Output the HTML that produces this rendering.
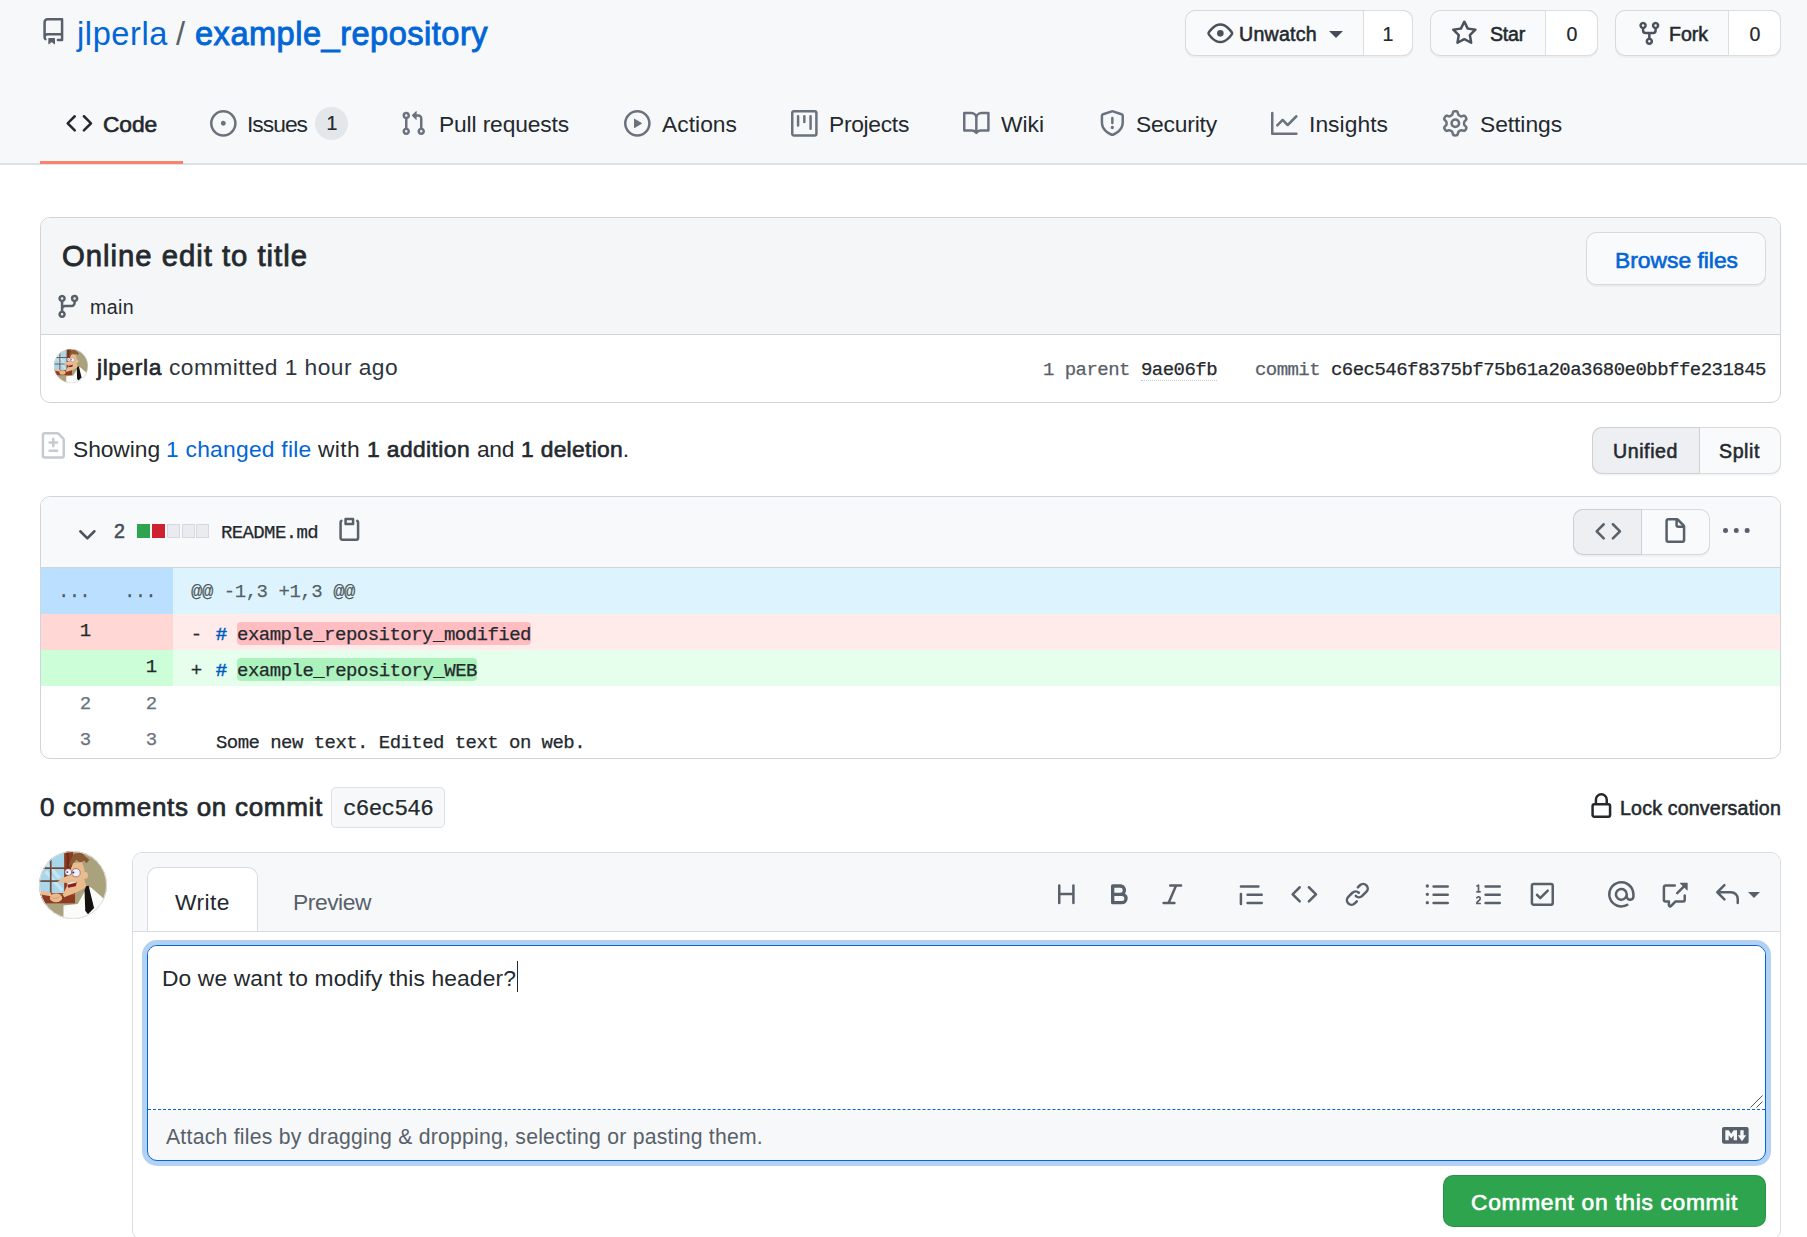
<!DOCTYPE html>
<html lang="en">
<head>
<meta charset="utf-8">
<title>Online edit to title · jlperla/example_repository@c6ec546</title>
<style>
html,body{margin:0;padding:0;background:#fff;}
body{width:1807px;height:1237px;position:relative;overflow:hidden;font-family:"Liberation Sans",sans-serif;color:#24292e;}
.b{position:absolute;box-sizing:border-box;}
.t{position:absolute;white-space:pre;line-height:1;}
.i{position:absolute;display:block;overflow:visible;}
.ds{width:13px;height:14px;background:#e9ebee;border:1px solid #d5d9de;}
.btn{background:#f9fafb;border:1px solid rgba(27,31,35,.15);border-radius:10px;box-shadow:0 2px 0 rgba(27,31,35,.04);}
.cnt{background:#fff;border:1px solid rgba(27,31,35,.15);border-radius:0 10px 10px 0;}
</style>
</head>
<body>
<svg width="0" height="0" style="position:absolute"><defs>
<clipPath id="avc"><circle cx="50" cy="50" r="50"/></clipPath>
<symbol id="av" viewBox="0 0 100 100">
<g clip-path="url(#avc)">
<rect width="100" height="100" fill="#aaa27d"/>
<rect x="0" y="4" width="38" height="60" fill="#a9d6ea"/>
<path d="M4 10 L30 40 M10 30 L34 58" stroke="#c7e6f3" stroke-width="5" fill="none"/>
<rect x="16" y="4" width="2.5" height="60" fill="#6d4a3a"/>
<rect x="0" y="24" width="38" height="2.5" fill="#6d4a3a"/>
<rect x="0" y="43" width="38" height="2.5" fill="#6d4a3a"/>
<rect x="37" y="0" width="13" height="76" fill="#8c3b22"/>
<rect x="41" y="0" width="3" height="70" fill="#6f2c18"/>
<rect x="0" y="62" width="53" height="15" fill="#8c3b22"/>
<rect x="0" y="62" width="53" height="3" fill="#a5502f"/>
<path d="M51 4 L63 2 L67 7 L74 13 L70 18 L66 14 L61 18 L55 13 L49 20 L43 22 L47 13 Z" fill="#8b5a33"/>
<path d="M50 18 L63 16 L67 28 L66 40 L70 53 L57 60 L37 68 L35 64 L41 52 L41 47 L27 45.500 L34 40 L43 36 L47 26 Z" fill="#eabb8d"/>
<ellipse cx="68" cy="36" rx="4" ry="5" fill="#eabb8d"/>
<path d="M41 47 L56 44 L54 52 L43 54 Z" fill="#8c1f22"/>
<path d="M41.500 46.800 L55.500 44 L55 46.500 L42 49.500 Z" fill="#f6efe4"/>
<circle cx="43" cy="31" r="5" fill="#f4eefb" stroke="#5b4a55" stroke-width=".8"/>
<circle cx="54.500" cy="32" r="6" fill="#f4eefb" stroke="#5b4a55" stroke-width=".8"/>
<circle cx="41.500" cy="31" r="1.300" fill="#2d2f8f"/><circle cx="50.500" cy="31.500" r="1.500" fill="#2d2f8f"/>
<path d="M70 52 L77 54 L93 68 L100 78 L100 100 L36 100 L36 80 L57 78 L67 60 Z" fill="#fbfbfa"/>
<path d="M69 52 L73 51 L81 84 L72 93 L68 88 L67 58 Z" fill="#15110f"/>
<path d="M2 58 L17 61 L19 67 L3 64 Z" fill="#eabb8d"/>
<ellipse cx="25" cy="69" rx="9" ry="6.500" fill="#eabb8d"/>
<path d="M19 68 Q24 72 30 67" stroke="#c98f63" stroke-width="1" fill="none"/>
</g>
<circle cx="50" cy="50" r="49.300" fill="none" stroke="#dfe1e4" stroke-width="1.400"/>
</symbol></defs></svg>
<div class="b" style="left:0;top:0;width:1807px;height:165px;background:#f6f8fa;border-bottom:2px solid #dde1e6"></div>
<div class="b" style="left:40px;top:161px;width:143px;height:3px;background:#f9826c"></div>
<div class="b btn" style="left:1185px;top:10px;width:228px;height:46px"></div><div class="b cnt" style="left:1363px;top:10px;width:50px;height:46px"></div>
<div class="b btn" style="left:1430px;top:10px;width:168px;height:46px"></div><div class="b cnt" style="left:1545px;top:10px;width:53px;height:46px"></div>
<div class="b btn" style="left:1615px;top:10px;width:166px;height:46px"></div><div class="b cnt" style="left:1728px;top:10px;width:53px;height:46px"></div>
<div class="b" style="left:1329px;top:31px;width:0;height:0;border:7px solid transparent;border-top-color:#444d56;border-bottom:0"></div>
<div class="b" style="left:315px;top:107px;width:33px;height:33px;border-radius:17px;background:rgba(209,213,218,.5)"></div>
<div class="b" style="left:40px;top:217px;width:1741px;height:186px;border:1px solid #d1d5da;border-radius:10px;background:#fff;overflow:hidden"><div class="b" style="left:0;top:0;width:1739px;height:117px;border-bottom:1px solid #d1d5da;background:#f4f6f8"></div></div>
<div class="b btn" style="left:1586px;top:232px;width:180px;height:53px;border-radius:10px"></div>
<svg class="i" style="left:54px;top:349px" width="34" height="34"><use href="#av"/></svg>
<div class="b btn" style="left:1592px;top:427px;width:189px;height:47px"></div>
<div class="b" style="left:1592px;top:427px;width:108px;height:47px;background:#edeff2;border:1px solid rgba(27,31,35,.15);border-radius:10px 0 0 10px"></div>
<div class="b" style="left:40px;top:496px;width:1741px;height:263px;border:1px solid #d1d5da;border-radius:10px;background:#fff;overflow:hidden">
 <div class="b" style="left:0;top:0;width:1739px;height:71px;background:#f8f9fb;border-bottom:1px solid #d1d5da"></div>
 <div class="b" style="left:0;top:71px;width:132px;height:46px;background:#bbdfff"></div><div class="b" style="left:132px;top:71px;width:1607px;height:46px;background:#ddf4ff"></div>
 <div class="b" style="left:0;top:117px;width:132px;height:36px;background:#ffd7d5"></div><div class="b" style="left:132px;top:117px;width:1607px;height:36px;background:#ffebe9"></div>
 <div class="b" style="left:0;top:153px;width:132px;height:36px;background:#ccffd8"></div><div class="b" style="left:132px;top:153px;width:1607px;height:36px;background:#e6ffec"></div>
</div>
<div class="b" style="left:237px;top:622px;width:294px;height:23px;background:#ffbdc2;border-radius:4px"></div>
<div class="b" style="left:237px;top:658px;width:240px;height:23px;background:#abf2bc;border-radius:4px"></div>
<div class="b" style="left:137px;top:524px;width:13px;height:14px;background:#2ea44f"></div>
<div class="b" style="left:152px;top:524px;width:13px;height:14px;background:#cf222e"></div>
<div class="b ds" style="left:167px;top:524px"></div>
<div class="b ds" style="left:182px;top:524px"></div>
<div class="b ds" style="left:196px;top:524px"></div>
<div class="b btn" style="left:1573px;top:509px;width:137px;height:46px"></div>
<div class="b" style="left:1573px;top:509px;width:69px;height:46px;background:#edeff2;border:1px solid rgba(27,31,35,.15);border-radius:10px 0 0 10px"></div>
<div class="b" style="left:331px;top:787px;width:114px;height:41px;background:#f6f8fa;border:1px solid #dde1e6;border-radius:5px"></div>
<svg class="i" style="left:39px;top:851px" width="68" height="68"><use href="#av"/></svg>
<div class="b" style="left:132px;top:852px;width:1649px;height:388px;border:1px solid #dadde2;border-radius:10px;background:#fff;overflow:hidden"><div class="b" style="left:0;top:0;width:1647px;height:79px;background:#f6f8fa;border-bottom:1px solid #d8dce1"></div></div>
<div class="b" style="left:147px;top:867px;width:111px;height:64px;background:#fff;border:1px solid #d8dce1;border-bottom:0;border-radius:10px 10px 0 0"></div>
<div class="b" style="left:147px;top:945px;width:1619px;height:216px;border:1px solid #0366d6;border-radius:10px;background:#f6f8fa;box-shadow:0 0 0 5px rgba(3,102,214,.3)"></div>
<div class="b" style="left:148px;top:946px;width:1617px;height:164px;background:#fff;border-bottom:1px dashed #0366d6;border-radius:9px 9px 0 0"></div>
<svg class="i" style="left:1749px;top:1094px" width="14" height="14" viewBox="0 0 14 14" fill="none" stroke="#555" stroke-width="1"><path d="M1.500 13.500 L13.500 1.500 M7.500 13.500 L13.500 7.500"/></svg>
<div class="b" style="left:517px;top:961px;width:1px;height:31px;background:#24292e"></div>
<div class="b" style="left:1443px;top:1175px;width:323px;height:52px;background:#2ea44f;border:1px solid rgba(27,31,35,.15);border-radius:10px"></div>
<div class="b" style="left:1748px;top:892px;width:0;height:0;border:6px solid transparent;border-top:6.5px solid #586069;border-bottom:0"></div>

<svg class="i" style="left:40px;top:18px" width="26.67" height="26.67" viewBox="0 0 16 16" fill="#586069"><path fill-rule="evenodd" d="M2 2.5A2.5 2.5 0 014.5 0h8.75a.75.75 0 01.75.75v12.5a.75.75 0 01-.75.75h-2.5a.75.75 0 110-1.5h1.75v-2h-8a1 1 0 00-.714 1.7.75.75 0 01-1.072 1.05A2.495 2.495 0 012 11.5v-9zm10.5-1V9h-8c-.356 0-.694.074-1 .208V2.5a1 1 0 011-1h8zM5 12.25v3.25a.25.25 0 00.4.2l1.45-1.087a.25.25 0 01.3 0L8.6 15.7a.25.25 0 00.4-.2v-3.25a.25.25 0 00-.25-.25h-3.5a.25.25 0 00-.25.25z"/></svg>
<svg class="i" style="left:1207px;top:20px" width="26.67" height="26.67" viewBox="0 0 16 16" fill="#4a525b"><path fill-rule="evenodd" d="M1.679 7.932c.412-.621 1.242-1.75 2.366-2.717C5.175 4.242 6.527 3.5 8 3.5c1.473 0 2.824.742 3.955 1.715 1.124.967 1.954 2.096 2.366 2.717a.119.119 0 010 .136c-.412.621-1.242 1.75-2.366 2.717C10.825 11.758 9.473 12.5 8 12.5c-1.473 0-2.824-.742-3.955-1.715C2.92 9.818 2.09 8.69 1.679 8.068a.119.119 0 010-.136zM8 2c-1.981 0-3.67.992-4.933 2.078C1.797 5.169.88 6.423.43 7.1a1.619 1.619 0 000 1.798c.45.678 1.367 1.932 2.637 3.024C4.329 13.008 6.019 14 8 14c1.981 0 3.67-.992 4.933-2.078 1.27-1.091 2.187-2.345 2.637-3.023a1.619 1.619 0 000-1.798c-.45-.678-1.367-1.932-2.637-3.023C11.671 2.992 9.981 2 8 2zm0 8a2 2 0 100-4 2 2 0 000 4z"/></svg>
<svg class="i" style="left:1451px;top:20px" width="26.67" height="26.67" viewBox="0 0 16 16" fill="#4a525b"><path fill-rule="evenodd" d="M8 .25a.75.75 0 01.673.418l1.882 3.815 4.21.612a.75.75 0 01.416 1.279l-3.046 2.97.719 4.192a.75.75 0 01-1.088.791L8 12.347l-3.766 1.98a.75.75 0 01-1.088-.79l.72-4.194L.818 6.374a.75.75 0 01.416-1.28l4.21-.611L7.327.668A.75.75 0 018 .25zm0 2.445L6.615 5.5a.75.75 0 01-.564.41l-3.097.45 2.24 2.184a.75.75 0 01.216.664l-.528 3.084 2.769-1.456a.75.75 0 01.698 0l2.77 1.456-.53-3.084a.75.75 0 01.216-.664l2.24-2.183-3.096-.45a.75.75 0 01-.564-.41L8 2.694v.001z"/></svg>
<svg class="i" style="left:1636px;top:20px" width="26.67" height="26.67" viewBox="0 0 16 16" fill="#4a525b"><path fill-rule="evenodd" d="M5 3.25a.75.75 0 11-1.5 0 .75.75 0 011.5 0zm0 2.122a2.25 2.25 0 10-1.5 0v.878A2.25 2.25 0 005.75 8.5h1.5v2.128a2.251 2.251 0 101.5 0V8.5h1.5a2.25 2.25 0 002.25-2.25v-.878a2.25 2.25 0 10-1.5 0v.878a.75.75 0 01-.75.75h-4.5A.75.75 0 015 6.25v-.878zm3.75 7.378a.75.75 0 11-1.5 0 .75.75 0 011.5 0zm3-8.75a.75.75 0 100-1.5.75.75 0 000 1.5z"/></svg>
<svg class="i" style="left:66px;top:110px" width="26.67" height="26.67" viewBox="0 0 16 16" fill="#24292e"><path fill-rule="evenodd" d="M4.72 3.22a.75.75 0 011.06 1.06L2.06 8l3.72 3.72a.75.75 0 11-1.06 1.06L.47 8.53a.75.75 0 010-1.06l4.25-4.25zm6.56 0a.75.75 0 10-1.06 1.06L13.94 8l-3.72 3.72a.75.75 0 101.06 1.06l4.25-4.25a.75.75 0 000-1.06l-4.25-4.25z"/></svg>
<svg class="i" style="left:210px;top:110px" width="26.67" height="26.67" viewBox="0 0 16 16" fill="#6a737d"><path fill-rule="evenodd" d="M8 9.5a1.5 1.5 0 100-3 1.5 1.5 0 000 3zM8 0a8 8 0 100 16A8 8 0 008 0zM1.5 8a6.5 6.5 0 1113 0 6.5 6.5 0 01-13 0z"/></svg>
<svg class="i" style="left:400px;top:110px" width="26.67" height="26.67" viewBox="0 0 16 16" fill="#6a737d"><path fill-rule="evenodd" d="M7.177 3.073L9.573.677A.25.25 0 0110 .854v4.792a.25.25 0 01-.427.177L7.177 3.427a.25.25 0 010-.354zM3.75 2.5a.75.75 0 100 1.5.75.75 0 000-1.5zm-2.25.75a2.25 2.25 0 113 2.122v5.256a2.251 2.251 0 11-1.5 0V5.372A2.25 2.25 0 011.5 3.25zM11 2.5h-1V4h1a1 1 0 011 1v5.628a2.251 2.251 0 101.5 0V5A2.5 2.5 0 0011 2.5zm1 10.25a.75.75 0 111.5 0 .75.75 0 01-1.5 0zM3.75 12a.75.75 0 100 1.5.75.75 0 000-1.5z"/></svg>
<svg class="i" style="left:624px;top:110px" width="26.67" height="26.67" viewBox="0 0 16 16" fill="#6a737d"><path fill-rule="evenodd" d="M1.5 8a6.5 6.5 0 1113 0 6.5 6.5 0 01-13 0zM8 0a8 8 0 100 16A8 8 0 008 0zM6.379 5.227A.25.25 0 006 5.442v5.117a.25.25 0 00.379.214l4.264-2.559a.25.25 0 000-.428L6.379 5.227z"/></svg>
<svg class="i" style="left:791px;top:110px" width="26.67" height="26.67" viewBox="0 0 16 16" fill="#6a737d"><path fill-rule="evenodd" d="M1.75 0A1.75 1.75 0 000 1.75v12.5C0 15.216.784 16 1.75 16h12.5A1.75 1.75 0 0016 14.25V1.75A1.75 1.75 0 0014.25 0H1.75zM1.5 1.75a.25.25 0 01.25-.25h12.5a.25.25 0 01.25.25v12.5a.25.25 0 01-.25.25H1.75a.25.25 0 01-.25-.25V1.75zM11.75 3a.75.75 0 00-.75.75v7.5a.75.75 0 001.5 0v-7.5a.75.75 0 00-.75-.75zm-8.25.75a.75.75 0 011.5 0v5.5a.75.75 0 01-1.5 0v-5.5zM8 3a.75.75 0 00-.75.75v3.5a.75.75 0 001.5 0v-3.5A.75.75 0 008 3z"/></svg>
<svg class="i" style="left:962.7px;top:110px" width="26.67" height="26.67" viewBox="0 0 16 16" fill="#6a737d"><path fill-rule="evenodd" d="M0 1.75A.75.75 0 01.75 1h4.253c1.227 0 2.317.59 3 1.501A3.744 3.744 0 0111.006 1h4.245a.75.75 0 01.75.75v10.5a.75.75 0 01-.75.75h-4.507a2.25 2.25 0 00-1.591.659l-.622.621a.75.75 0 01-1.06 0l-.622-.621A2.25 2.25 0 005.258 13H.75a.75.75 0 01-.75-.75V1.75zm8.755 3a2.25 2.25 0 012.25-2.25H14.5v9h-3.757c-.71 0-1.4.201-1.992.572l.004-7.322zm-1.504 7.324l.004-5.073-.002-2.253A2.25 2.25 0 005.003 2.5H1.5v9h3.757a3.75 3.75 0 011.994.574z"/></svg>
<svg class="i" style="left:1098.5px;top:110px" width="26.67" height="26.67" viewBox="0 0 16 16" fill="#6a737d"><path fill-rule="evenodd" d="M7.467.133a1.75 1.75 0 011.066 0l5.25 1.68A1.75 1.75 0 0115 3.48V7c0 1.566-.32 3.182-1.303 4.682-.983 1.498-2.585 2.813-5.032 3.855a1.7 1.7 0 01-1.33 0c-2.447-1.042-4.049-2.357-5.032-3.855C1.32 10.182 1 8.566 1 7V3.48a1.75 1.75 0 011.217-1.667l5.25-1.68zm.61 1.429a.25.25 0 00-.153 0l-5.25 1.68a.25.25 0 00-.174.238V7c0 1.358.275 2.666 1.057 3.86.784 1.194 2.121 2.34 4.366 3.297a.2.2 0 00.154 0c2.245-.956 3.582-2.104 4.366-3.298C13.225 9.666 13.5 8.36 13.5 7V3.48a.25.25 0 00-.174-.237l-5.25-1.68zM9 10.5a1 1 0 11-2 0 1 1 0 012 0zm-.25-5.75a.75.75 0 10-1.5 0v3a.75.75 0 001.5 0v-3z"/></svg>
<svg class="i" style="left:1271px;top:110px" width="26.67" height="26.67" viewBox="0 0 16 16" fill="#6a737d"><path fill-rule="evenodd" d="M1.5 1.75a.75.75 0 00-1.5 0v12.5c0 .414.336.75.75.75h14.5a.75.75 0 000-1.5H1.5V1.75zm14.28 2.53a.75.75 0 00-1.06-1.06L10 7.94 7.53 5.47a.75.75 0 00-1.06 0L3.22 8.72a.75.75 0 001.06 1.06L7 7.06l2.47 2.47a.75.75 0 001.06 0l5.25-5.25z"/></svg>
<svg class="i" style="left:1442px;top:110px" width="26.67" height="26.67" viewBox="0 0 16 16" fill="#6a737d"><path fill-rule="evenodd" d="M7.429 1.525a6.593 6.593 0 011.142 0c.036.003.108.036.137.146l.289 1.105c.147.56.55.967.997 1.189.174.086.341.183.501.29.417.278.97.423 1.53.27l1.102-.303c.11-.03.175.016.195.046.219.31.41.641.573.989.014.031.022.11-.059.19l-.815.806c-.411.406-.562.957-.53 1.456a4.588 4.588 0 010 .582c-.032.499.119 1.05.53 1.456l.815.806c.08.08.073.159.059.19a6.494 6.494 0 01-.573.99c-.02.029-.086.074-.195.045l-1.103-.303c-.559-.153-1.112-.008-1.529.27-.16.107-.327.204-.5.29-.449.222-.851.628-.998 1.189l-.289 1.105c-.029.11-.101.143-.137.146a6.613 6.613 0 01-1.142 0c-.036-.003-.108-.037-.137-.146l-.289-1.105c-.147-.56-.55-.967-.997-1.189a4.502 4.502 0 01-.501-.29c-.417-.278-.97-.423-1.53-.27l-1.102.303c-.11.03-.175-.016-.195-.046a6.492 6.492 0 01-.573-.989c-.014-.031-.022-.11.059-.19l.815-.806c.411-.406.562-.957.53-1.456a4.587 4.587 0 010-.582c.032-.499-.119-1.05-.53-1.456l-.815-.806c-.08-.08-.073-.159-.059-.19a6.44 6.44 0 01.573-.99c.02-.029.086-.075.195-.045l1.103.303c.559.153 1.112.008 1.529-.27.16-.107.327-.204.5-.29.449-.222.851-.628.998-1.189l.289-1.105c.029-.11.101-.143.137-.146zM8 0c-.236 0-.47.01-.701.03-.743.065-1.29.615-1.458 1.261l-.29 1.106c-.017.066-.078.158-.211.224a5.994 5.994 0 00-.668.386c-.123.082-.233.09-.3.071L3.27 2.776c-.644-.177-1.392.02-1.82.63a7.977 7.977 0 00-.704 1.217c-.315.675-.111 1.422.363 1.891l.815.806c.05.048.098.147.088.294a6.084 6.084 0 000 .772c.01.147-.038.246-.088.294l-.815.806c-.474.469-.678 1.216-.363 1.891.2.428.436.835.704 1.218.428.609 1.176.806 1.82.63l1.103-.303c.066-.019.176-.011.299.071.213.143.436.272.668.386.133.066.194.158.212.224l.289 1.106c.169.646.715 1.196 1.458 1.26a8.094 8.094 0 001.402 0c.743-.064 1.29-.614 1.458-1.26l.29-1.106c.017-.066.078-.158.211-.224a5.98 5.98 0 00.668-.386c.123-.082.233-.09.3-.071l1.102.302c.644.177 1.392-.02 1.82-.63.268-.382.505-.789.704-1.217.315-.675.111-1.422-.364-1.891l-.814-.806c-.05-.048-.098-.147-.088-.294a6.1 6.1 0 000-.772c-.01-.147.039-.246.088-.294l.814-.806c.475-.469.679-1.216.364-1.891a7.992 7.992 0 00-.704-1.218c-.428-.609-1.176-.806-1.82-.63l-1.103.303c-.066.019-.176.011-.299-.071a5.991 5.991 0 00-.668-.386c-.133-.066-.194-.158-.212-.224L10.16 1.29C9.99.645 9.444.095 8.701.031A8.094 8.094 0 008 0zm1.5 8a1.5 1.5 0 11-3 0 1.5 1.5 0 013 0zM11 8a3 3 0 11-6 0 3 3 0 016 0z"/></svg>
<svg class="i" style="left:55px;top:293px" width="26.67" height="26.67" viewBox="0 0 16 16" fill="#586069"><path fill-rule="evenodd" d="M11.75 2.5a.75.75 0 100 1.5.75.75 0 000-1.5zm-2.25.75a2.25 2.25 0 113 2.122V6A2.5 2.5 0 0110 8.5H6a1 1 0 00-1 1v1.128a2.251 2.251 0 11-1.5 0V5.372a2.25 2.25 0 111.5 0v1.836A2.492 2.492 0 016 7h4a1 1 0 001-1v-.628A2.25 2.25 0 019.5 3.25zM4.25 12a.75.75 0 100 1.5.75.75 0 000-1.5zM3.5 3.25a.75.75 0 111.5 0 .75.75 0 01-1.5 0z"/></svg>
<svg class="i" style="left:40px;top:432px" width="26.67" height="26.67" viewBox="0 0 16 16" fill="#c6cbd1"><path fill-rule="evenodd" d="M2.75 1.5a.25.25 0 00-.25.25v12.5c0 .138.112.25.25.25h10.5a.25.25 0 00.25-.25V4.664a.25.25 0 00-.073-.177l-2.914-2.914a.25.25 0 00-.177-.073H2.75zM1 1.75C1 .784 1.784 0 2.75 0h7.586c.464 0 .909.184 1.237.513l2.914 2.914c.329.328.513.773.513 1.237v9.586A1.75 1.75 0 0113.25 16H2.75A1.75 1.75 0 011 14.25V1.75zm7 1.5a.75.75 0 01.75.75v1.5h1.5a.75.75 0 010 1.5h-1.5v1.5a.75.75 0 01-1.5 0V7h-1.5a.75.75 0 010-1.5h1.5V4A.75.75 0 018 3.25zm-3 8a.75.75 0 01.75-.75h4.5a.75.75 0 010 1.5h-4.5a.75.75 0 01-.75-.75z"/></svg>
<svg class="i" style="left:74px;top:520px" width="26.67" height="26.67" viewBox="0 0 16 16" fill="#4a525b"><path fill-rule="evenodd" d="M12.78 6.22a.75.75 0 010 1.06l-4.25 4.25a.75.75 0 01-1.06 0L3.22 7.28a.75.75 0 011.06-1.06L8 9.94l3.72-3.72a.75.75 0 011.06 0z"/></svg>
<svg class="i" style="left:336px;top:516px" width="26.67" height="26.67" viewBox="0 0 16 16" fill="#586069"><path fill-rule="evenodd" d="M5.75 1a.75.75 0 00-.75.75v3c0 .414.336.75.75.75h4.5a.75.75 0 00.75-.75v-3a.75.75 0 00-.75-.75h-4.5zm.75 3V2.5h3V4h-3zm-2.874-.467a.75.75 0 00-.752-1.298A1.75 1.75 0 002 3.75v9.5c0 .966.784 1.75 1.75 1.75h8.5A1.75 1.75 0 0014 13.25v-9.5a1.75 1.75 0 00-.874-1.515.75.75 0 10-.752 1.298.25.25 0 01.126.217v9.5a.25.25 0 01-.25.25h-8.5a.25.25 0 01-.25-.25v-9.5a.25.25 0 01.126-.217z"/></svg>
<svg class="i" style="left:1595px;top:517.7px" width="26.67" height="26.67" viewBox="0 0 16 16" fill="#586069"><path fill-rule="evenodd" d="M4.72 3.22a.75.75 0 011.06 1.06L2.06 8l3.72 3.72a.75.75 0 11-1.06 1.06L.47 8.53a.75.75 0 010-1.06l4.25-4.25zm6.56 0a.75.75 0 10-1.06 1.06L13.94 8l-3.72 3.72a.75.75 0 101.06 1.06l4.25-4.25a.75.75 0 000-1.06l-4.25-4.25z"/></svg>
<svg class="i" style="left:1662.3px;top:518.3px" width="26.67" height="26.67" viewBox="0 0 16 16" fill="#586069"><path fill-rule="evenodd" d="M3.75 1.5a.25.25 0 00-.25.25v11.5c0 .138.112.25.25.25h8.5a.25.25 0 00.25-.25V6H9.75A1.75 1.75 0 018 4.25V1.5H3.75zm5.75.56v2.19c0 .138.112.25.25.25h2.19L9.5 2.06zM2 1.75C2 .784 2.784 0 3.75 0h5.086c.464 0 .909.184 1.237.513l3.414 3.414c.329.328.513.773.513 1.237v8.086A1.75 1.75 0 0112.25 15h-8.5A1.75 1.75 0 012 13.25V1.75z"/></svg>
<svg class="i" style="left:1723px;top:518.2px" width="26.67" height="26.67" viewBox="0 0 16 16" fill="#586069"><path fill-rule="evenodd" d="M8 9a1.5 1.5 0 100-3 1.5 1.5 0 000 3zM1.5 9a1.5 1.5 0 100-3 1.5 1.5 0 000 3zm13 0a1.5 1.5 0 100-3 1.5 1.5 0 000 3z"/></svg>
<svg class="i" style="left:1588px;top:793px" width="26.67" height="26.67" viewBox="0 0 16 16" fill="#24292e"><path fill-rule="evenodd" d="M4 4v2h-.25A1.75 1.75 0 002 7.75v5.5c0 .966.784 1.75 1.75 1.75h8.5A1.75 1.75 0 0014 13.25v-5.5A1.75 1.75 0 0012.25 6H12V4a4 4 0 10-8 0zm6.5 2V4a2.5 2.5 0 00-5 0v2h5zM12 7.5h.25a.25.25 0 01.25.25v5.5a.25.25 0 01-.25.25h-8.5a.25.25 0 01-.25-.25v-5.5a.25.25 0 01.25-.25H12z"/></svg>
<svg class="i" style="left:1053.2px;top:880.8px" width="26.67" height="26.67" viewBox="0 0 16 16" fill="#586069"><path fill-rule="evenodd" d="M3.75 2a.75.75 0 01.75.75V7h7V2.75a.75.75 0 011.5 0v10.5a.75.75 0 01-1.5 0V8.5h-7v4.75a.75.75 0 01-1.5 0V2.75A.75.75 0 013.75 2z"/></svg>
<svg class="i" style="left:1106.2px;top:880.8px" width="26.67" height="26.67" viewBox="0 0 16 16" fill="#586069"><path fill-rule="evenodd" d="M4 2a1 1 0 00-1 1v10a1 1 0 001 1h5.5a3.5 3.5 0 001.852-6.47A3.5 3.5 0 008.5 2H4zm4.5 5a1.5 1.5 0 100-3H5v3h3.5zM5 9v3h4.5a1.5 1.5 0 000-3H5z"/></svg>
<svg class="i" style="left:1159.2px;top:880.8px" width="26.67" height="26.67" viewBox="0 0 16 16" fill="#586069"><path fill-rule="evenodd" d="M6 2.75A.75.75 0 016.75 2h6.5a.75.75 0 010 1.5h-2.505l-3.858 9H9.25a.75.75 0 010 1.5h-6.5a.75.75 0 010-1.5h2.505l3.858-9H6.75A.75.75 0 016 2.75z"/></svg>
<svg class="i" style="left:1238px;top:880.8px" width="26.67" height="26.67" viewBox="0 0 16 16" fill="#586069"><path fill-rule="evenodd" d="M1.75 2.5a.75.75 0 000 1.5h10.5a.75.75 0 000-1.5H1.75zm4 5a.75.75 0 000 1.5h8.5a.75.75 0 000-1.5h-8.5zm0 5a.75.75 0 000 1.5h8.5a.75.75 0 000-1.5h-8.5zM2.5 7.75a.75.75 0 00-1.5 0v6a.75.75 0 001.5 0v-6z"/></svg>
<svg class="i" style="left:1291px;top:880.8px" width="26.67" height="26.67" viewBox="0 0 16 16" fill="#586069"><path fill-rule="evenodd" d="M4.72 3.22a.75.75 0 011.06 1.06L2.06 8l3.72 3.72a.75.75 0 11-1.06 1.06L.47 8.53a.75.75 0 010-1.06l4.25-4.25zm6.56 0a.75.75 0 10-1.06 1.06L13.94 8l-3.72 3.72a.75.75 0 101.06 1.06l4.25-4.25a.75.75 0 000-1.06l-4.25-4.25z"/></svg>
<svg class="i" style="left:1344px;top:880.8px" width="26.67" height="26.67" viewBox="0 0 16 16" fill="#586069"><path fill-rule="evenodd" d="M7.775 3.275a.75.75 0 001.06 1.06l1.25-1.25a2 2 0 112.83 2.83l-2.5 2.5a2 2 0 01-2.83 0 .75.75 0 00-1.06 1.06 3.5 3.5 0 004.95 0l2.5-2.5a3.5 3.5 0 00-4.95-4.95l-1.25 1.25zm-4.69 9.64a2 2 0 010-2.83l2.5-2.5a2 2 0 012.83 0 .75.75 0 001.06-1.06 3.5 3.5 0 00-4.95 0l-2.5 2.5a3.5 3.5 0 004.95 4.95l1.25-1.25a.75.75 0 00-1.06-1.06l-1.25 1.25a2 2 0 01-2.83 0z"/></svg>
<svg class="i" style="left:1423.5px;top:880.8px" width="26.67" height="26.67" viewBox="0 0 16 16" fill="#586069"><path fill-rule="evenodd" d="M2 4a1 1 0 100-2 1 1 0 000 2zm3.75-1.5a.75.75 0 000 1.5h8.5a.75.75 0 000-1.5h-8.5zm0 5a.75.75 0 000 1.5h8.5a.75.75 0 000-1.5h-8.5zm0 5a.75.75 0 000 1.5h8.5a.75.75 0 000-1.5h-8.5zM3 8a1 1 0 11-2 0 1 1 0 012 0zm-1 6a1 1 0 100-2 1 1 0 000 2z"/></svg>
<svg class="i" style="left:1475.5px;top:880.8px" width="26.67" height="26.67" viewBox="0 0 16 16" fill="#586069"><path fill-rule="evenodd" d="M2.003 2.5a.5.5 0 00-.723-.447l-1.003.5a.5.5 0 00.446.895l.28-.14V6H.5a.5.5 0 000 1h2.006a.5.5 0 100-1h-.503V2.5zM5 3.25a.75.75 0 01.75-.75h8.5a.75.75 0 010 1.5h-8.5A.75.75 0 015 3.25zm0 5a.75.75 0 01.75-.75h8.5a.75.75 0 010 1.5h-8.5A.75.75 0 015 8.25zm0 5a.75.75 0 01.75-.75h8.5a.75.75 0 010 1.5h-8.5a.75.75 0 01-.75-.75zM.924 10.32l.003-.004a.851.851 0 01.144-.153A.66.66 0 011.5 10c.195 0 .306.068.374.146a.57.57 0 01.128.376c0 .453-.269.682-.8 1.078l-.035.025C.692 11.98 0 12.495 0 13.5a.5.5 0 00.5.5h2.003a.5.5 0 000-1H1.146c.132-.197.351-.372.654-.597l.047-.035c.47-.35 1.156-.858 1.156-1.845 0-.365-.118-.744-.377-1.038-.268-.303-.658-.484-1.126-.484-.48 0-.84.202-1.068.392a1.858 1.858 0 00-.348.384l-.007.011-.002.004-.001.002-.001.001a.5.5 0 00.851.525z"/></svg>
<svg class="i" style="left:1528.5px;top:880.8px" width="26.67" height="26.67" viewBox="0 0 16 16" fill="#586069"><path fill-rule="evenodd" d="M2.5 2.75a.25.25 0 01.25-.25h10.5a.25.25 0 01.25.25v10.5a.25.25 0 01-.25.25H2.75a.25.25 0 01-.25-.25V2.75zM2.75 1A1.75 1.75 0 001 2.75v10.5c0 .966.784 1.75 1.75 1.75h10.5A1.75 1.75 0 0015 13.25V2.75A1.75 1.75 0 0013.25 1H2.75zm9.03 5.28a.75.75 0 00-1.06-1.06L6.75 9.19 5.28 7.72a.75.75 0 00-1.06 1.06l2 2a.75.75 0 001.06 0l4.5-4.5z"/></svg>
<svg class="i" style="left:1607.5px;top:880.8px" width="26.67" height="26.67" viewBox="0 0 16 16" fill="#586069"><path fill-rule="evenodd" d="M4.75 2.37a6.5 6.5 0 006.5 11.26.75.75 0 01.75 1.298 8 8 0 113.994-7.273.754.754 0 01.006.095v1.5a2.75 2.75 0 01-5.072 1.475A4 4 0 1112 8v1.25a1.25 1.25 0 002.5 0V7.867a6.5 6.5 0 00-9.75-5.496V2.37zM10.5 8a2.5 2.5 0 10-5 0 2.5 2.5 0 005 0z"/></svg>
<svg class="i" style="left:1660.5px;top:880.8px" width="26.67" height="26.67" viewBox="0 0 16 16" fill="#586069"><path fill-rule="evenodd" d="M16 1.25v4.146a.25.25 0 01-.427.177L14.03 4.03l-3.75 3.75a.75.75 0 11-1.06-1.06l3.75-3.75-1.543-1.543A.25.25 0 0111.604 1h4.146a.25.25 0 01.25.25zM2.75 3.5a.25.25 0 00-.25.25v7.5c0 .138.112.25.25.25h2a.75.75 0 01.75.75v2.19l2.72-2.72a.75.75 0 01.53-.22h4.5a.25.25 0 00.25-.25v-2.5a.75.75 0 111.5 0v2.5A1.75 1.75 0 0113.25 13H9.06l-2.573 2.573A1.457 1.457 0 014 14.543V13H2.75A1.75 1.75 0 011 11.25v-7.5C1 2.784 1.784 2 2.75 2h5.5a.75.75 0 010 1.5h-5.5z"/></svg>
<svg class="i" style="left:1713.5px;top:880.8px" width="26.67" height="26.67" viewBox="0 0 16 16" fill="#586069"><path fill-rule="evenodd" d="M6.78 1.97a.75.75 0 010 1.06L3.81 6h6.44A4.75 4.75 0 0115 10.75v2.5a.75.75 0 01-1.5 0v-2.5a3.25 3.25 0 00-3.25-3.25H3.81l2.97 2.97a.75.75 0 11-1.06 1.06L1.47 7.28a.75.75 0 010-1.06l4.25-4.25a.75.75 0 011.06 0z"/></svg>
<svg class="i" style="left:1722px;top:1122px" width="26.67" height="26.67" viewBox="0 0 16 16" fill="#586069"><path fill-rule="evenodd" d="M14.85 3H1.15C.52 3 0 3.52 0 4.15v7.69C0 12.48.52 13 1.15 13h13.69c.64 0 1.15-.52 1.15-1.15v-7.7C16 3.52 15.48 3 14.85 3zM9 11H7V8L5.5 9.92 4 8v3H2V5h2l1.5 2L7 5h2v6zm2.99.5L9.5 8H11V5h2v3h1.5l-2.51 3.5z"/></svg>
<span class="t" style='left:77px;top:18.00px;font-size:32.6px;color:#0366d6;letter-spacing:0.583px;'>jlperla</span>
<span class="t" style='left:175.97px;top:18.00px;font-size:32.6px;color:#586069;'>/</span>
<span class="t" style='left:195px;top:18.00px;font-size:32.6px;-webkit-text-stroke:0.028em;color:#0366d6;letter-spacing:0.484px;'>example_repository</span>
<span class="t" style='left:1239px;top:25.00px;font-size:19.6px;-webkit-text-stroke:0.028em;letter-spacing:0.252px;'>Unwatch</span>
<span class="t" style='left:1382.55px;top:25.00px;font-size:19.6px;-webkit-text-stroke:0.012em;'>1</span>
<span class="t" style='left:1490px;top:25.00px;font-size:19.6px;-webkit-text-stroke:0.028em;letter-spacing:-0.234px;'>Star</span>
<span class="t" style='left:1566.55px;top:25.00px;font-size:19.6px;-webkit-text-stroke:0.012em;'>0</span>
<span class="t" style='left:1669px;top:25.00px;font-size:19.6px;-webkit-text-stroke:0.028em;letter-spacing:-0.047px;'>Fork</span>
<span class="t" style='left:1749.55px;top:25.00px;font-size:19.6px;-webkit-text-stroke:0.012em;'>0</span>
<span class="t" style='left:103px;top:113.00px;font-size:22.8px;-webkit-text-stroke:0.028em;letter-spacing:-0.125px;'>Code</span>
<span class="t" style='left:247px;top:113.00px;font-size:22.8px;letter-spacing:-0.982px;'>Issues</span>
<span class="t" style='left:326.55px;top:114.00px;font-size:19.6px;-webkit-text-stroke:0.012em;'>1</span>
<span class="t" style='left:439px;top:113.00px;font-size:22.8px;letter-spacing:-0.138px;'>Pull requests</span>
<span class="t" style='left:662px;top:113.00px;font-size:22.8px;letter-spacing:0.033px;'>Actions</span>
<span class="t" style='left:829px;top:113.00px;font-size:22.8px;letter-spacing:-0.295px;'>Projects</span>
<span class="t" style='left:1001px;top:113.00px;font-size:22.8px;letter-spacing:-0.012px;'>Wiki</span>
<span class="t" style='left:1136px;top:113.00px;font-size:22.8px;letter-spacing:-0.170px;'>Security</span>
<span class="t" style='left:1309px;top:113.00px;font-size:22.8px;letter-spacing:0.053px;'>Insights</span>
<span class="t" style='left:1480px;top:113.00px;font-size:22.8px;letter-spacing:-0.047px;'>Settings</span>
<span class="t" style='left:62px;top:241.00px;font-size:29.3px;-webkit-text-stroke:0.028em;letter-spacing:0.981px;'>Online edit to title</span>
<span class="t" style='left:90px;top:298.00px;font-size:19.6px;letter-spacing:0.379px;'>main</span>
<span class="t" style='left:1615px;top:249.00px;font-size:22.8px;-webkit-text-stroke:0.028em;color:#0366d6;letter-spacing:0.009px;'>Browse files</span>
<span class="t" style='left:97px;top:356.00px;font-size:22.8px;-webkit-text-stroke:0.028em;letter-spacing:0.596px;'>jlperla</span>
<span class="t" style='left:169px;top:356.00px;font-size:22.8px;color:#2f363d;letter-spacing:0.425px;'>committed 1 hour ago</span>
<span class="t" style='left:1043px;top:361.00px;font-size:19px;color:#586069;font-family:"Liberation Mono", monospace;-webkit-text-stroke:0.25px;letter-spacing:-0.527px;'>1 parent</span>
<span class="t" style='left:1141px;top:361.00px;font-size:19px;font-family:"Liberation Mono", monospace;-webkit-text-stroke:0.25px;letter-spacing:-0.547px;border-bottom:1px dotted #c6cbd1;'>9ae06fb</span>
<span class="t" style='left:1255px;top:361.00px;font-size:19px;color:#586069;font-family:"Liberation Mono", monospace;-webkit-text-stroke:0.25px;letter-spacing:-0.570px;'>commit</span>
<span class="t" style='left:1331px;top:361.00px;font-size:19px;font-family:"Liberation Mono", monospace;-webkit-text-stroke:0.25px;letter-spacing:-0.527px;'>c6ec546f8375bf75b61a20a3680e0bbffe231845</span>
<span class="t" style='left:73px;top:438.00px;font-size:22.8px;letter-spacing:-0.065px;'>Showing</span>
<span class="t" style='left:166px;top:438.00px;font-size:22.8px;color:#0366d6;letter-spacing:0.252px;'>1 changed file</span>
<span class="t" style='left:318px;top:438.00px;font-size:22.8px;letter-spacing:0.363px;'>with</span>
<span class="t" style='left:367px;top:438.00px;font-size:22.8px;-webkit-text-stroke:0.028em;letter-spacing:0.412px;'>1 addition</span>
<span class="t" style='left:477px;top:438.00px;font-size:22.8px;letter-spacing:-0.349px;'>and</span>
<span class="t" style='left:521px;top:438.00px;font-size:22.8px;-webkit-text-stroke:0.028em;letter-spacing:0.312px;'>1 deletion</span>
<span class="t" style='left:622.83px;top:438.00px;font-size:22.8px;'>.</span>
<span class="t" style='left:1613px;top:442.00px;font-size:19.6px;-webkit-text-stroke:0.028em;letter-spacing:0.571px;'>Unified</span>
<span class="t" style='left:1719px;top:442.00px;font-size:19.6px;-webkit-text-stroke:0.028em;letter-spacing:0.575px;'>Split</span>
<span class="t" style='left:114.05px;top:522.00px;font-size:19.6px;-webkit-text-stroke:0.028em;color:#444d56;'>2</span>
<span class="t" style='left:221px;top:524.00px;font-size:19px;font-family:"Liberation Mono", monospace;-webkit-text-stroke:0.25px;letter-spacing:-0.625px;'>README.md</span>
<span class="t" style='left:58px;top:583.00px;font-size:19px;color:rgba(27,31,35,.7);font-family:"Liberation Mono", monospace;-webkit-text-stroke:0.25px;letter-spacing:-0.740px;'>...</span>
<span class="t" style='left:124px;top:583.00px;font-size:19px;color:rgba(27,31,35,.7);font-family:"Liberation Mono", monospace;-webkit-text-stroke:0.25px;letter-spacing:-0.740px;'>...</span>
<span class="t" style='left:191px;top:583.00px;font-size:19px;color:rgba(27,31,35,.7);font-family:"Liberation Mono", monospace;-webkit-text-stroke:0.25px;letter-spacing:-0.469px;'>@@ -1,3 +1,3 @@</span>
<span class="t" style='left:79.8px;top:622.00px;font-size:19px;font-family:"Liberation Mono", monospace;-webkit-text-stroke:0.25px;'>1</span>
<span class="t" style='left:190.8px;top:626.00px;font-size:19px;font-family:"Liberation Mono", monospace;-webkit-text-stroke:0.25px;'>-</span>
<span class="t" style='left:215.8px;top:626.00px;font-size:19px;-webkit-text-stroke:0.028em;color:#005cc5;font-family:"Liberation Mono", monospace;'>#</span>
<span class="t" style='left:237px;top:626.00px;font-size:19px;font-family:"Liberation Mono", monospace;-webkit-text-stroke:0.25px;letter-spacing:-0.513px;'>example_repository_modified</span>
<span class="t" style='left:145.8px;top:658.00px;font-size:19px;font-family:"Liberation Mono", monospace;-webkit-text-stroke:0.25px;'>1</span>
<span class="t" style='left:190.8px;top:662.00px;font-size:19px;font-family:"Liberation Mono", monospace;-webkit-text-stroke:0.25px;'>+</span>
<span class="t" style='left:215.8px;top:662.00px;font-size:19px;-webkit-text-stroke:0.028em;color:#005cc5;font-family:"Liberation Mono", monospace;'>#</span>
<span class="t" style='left:237px;top:662.00px;font-size:19px;font-family:"Liberation Mono", monospace;-webkit-text-stroke:0.25px;letter-spacing:-0.493px;'>example_repository_WEB</span>
<span class="t" style='left:79.8px;top:695.00px;font-size:19px;color:#6a737d;font-family:"Liberation Mono", monospace;-webkit-text-stroke:0.25px;'>2</span>
<span class="t" style='left:145.8px;top:695.00px;font-size:19px;color:#6a737d;font-family:"Liberation Mono", monospace;-webkit-text-stroke:0.25px;'>2</span>
<span class="t" style='left:79.8px;top:731.00px;font-size:19px;color:#6a737d;font-family:"Liberation Mono", monospace;-webkit-text-stroke:0.25px;'>3</span>
<span class="t" style='left:145.8px;top:731.00px;font-size:19px;color:#6a737d;font-family:"Liberation Mono", monospace;-webkit-text-stroke:0.25px;'>3</span>
<span class="t" style='left:216px;top:734.00px;font-size:19px;font-family:"Liberation Mono", monospace;-webkit-text-stroke:0.25px;letter-spacing:-0.549px;'>Some new text. Edited text on web.</span>
<span class="t" style='left:40px;top:794.00px;font-size:26px;-webkit-text-stroke:0.028em;letter-spacing:0.713px;'>0 comments on commit</span>
<span class="t" style='left:343px;top:798.00px;font-size:22.5px;font-family:"Liberation Mono", monospace;-webkit-text-stroke:0.25px;letter-spacing:-0.645px;'>c6ec546</span>
<span class="t" style='left:1620px;top:799.00px;font-size:19.6px;-webkit-text-stroke:0.028em;letter-spacing:0.180px;'>Lock conversation</span>
<span class="t" style='left:175px;top:891.00px;font-size:22.8px;letter-spacing:0.444px;'>Write</span>
<span class="t" style='left:293px;top:891.00px;font-size:22.8px;color:#586069;letter-spacing:-0.442px;'>Preview</span>
<span class="t" style='left:162px;top:967.00px;font-size:22.8px;letter-spacing:0.129px;'>Do we want to modify this header?</span>
<span class="t" style='left:166px;top:1126.00px;font-size:21.2px;color:#586069;letter-spacing:0.241px;'>Attach files by dragging &amp; dropping, selecting or pasting them.</span>
<span class="t" style='left:1471px;top:1191.00px;font-size:22.8px;-webkit-text-stroke:0.028em;color:#fff;letter-spacing:0.677px;'>Comment on this commit</span>
</body>
</html>
